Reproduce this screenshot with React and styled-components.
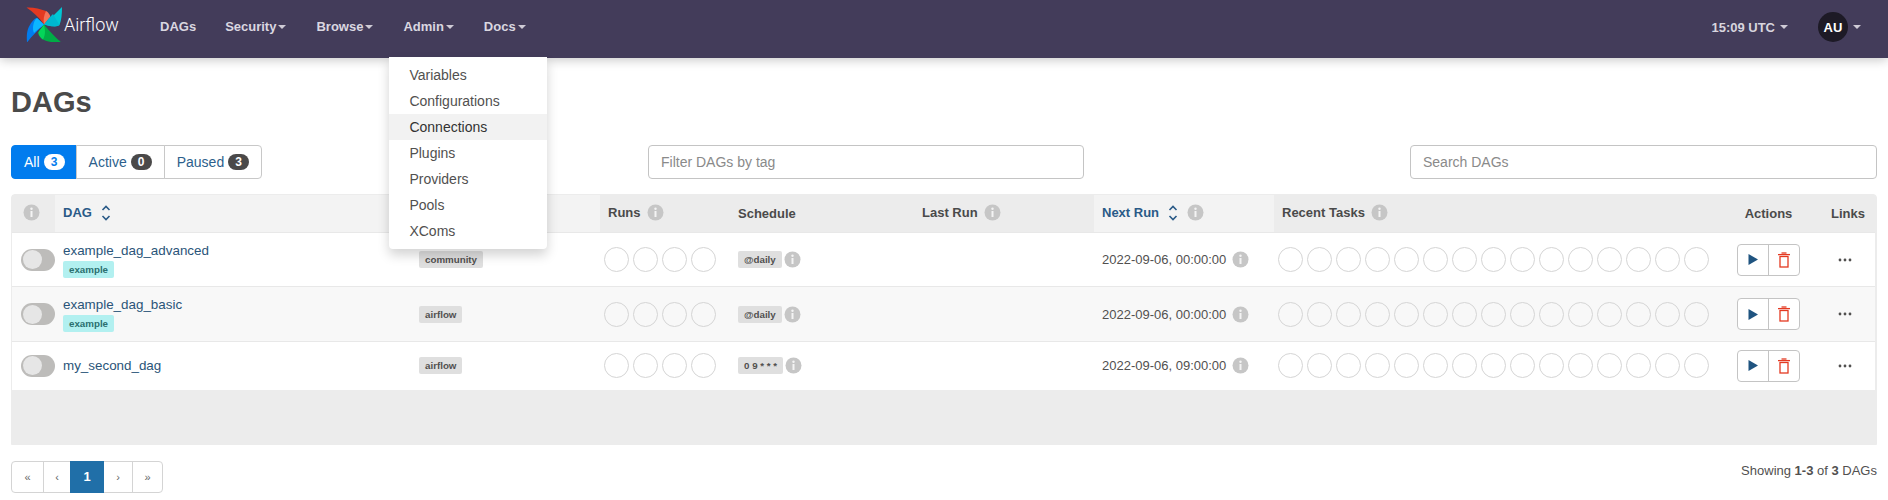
import React from 'react';
import styled, { createGlobalStyle } from 'styled-components';

const GlobalStyle = createGlobalStyle`
  html, body {
    margin: 0;
    padding: 0;
    height: 500px;
    overflow: hidden;
    background: #fff;
    font-family: "Liberation Sans", Arial, sans-serif;
    font-size: 13px;
    color: #51504f;
  }
`;

// Navbar

const Navbar = styled.nav`
  position: relative;
  z-index: 2;
  display: flex;
  align-items: center;
  height: 58px;
  padding: 0 27px 0 26px;
  background: #433c5a;
  box-shadow: 0 2px 10px rgba(0, 0, 0, 0.22);
`;

const Brand = styled.a`
  display: flex;
  align-items: center;
  width: 119px;
  height: 48px;
  margin-top: -10px;
  color: #fff;
`;

const BrandText = styled.span`
  margin: 0 0 0 2px;
  font-family: Roboto, "Liberation Sans", sans-serif;
  font-weight: 300;
  font-size: 18px;
`;

const NavList = styled.ul`
  display: flex;
  margin: 0;
  padding: 0;
  list-style: none;
`;

const NavItem = styled.li`
  position: relative;
  display: flex;
  align-items: center;
  height: 20px;
  margin-top: -4px;
  padding: 0 ${(props) => (props.$tight ? 14 : 15)}px 0 15px;
  color: #dad7e0;
  font-weight: 700;
  font-size: 13px;
  line-height: 20px;
`;

const Caret = styled.span`
  width: 0;
  height: 0;
  margin-left: ${(props) => props.$gap || 2}px;
  border-top: 4px solid ${(props) => props.$color || '#cfcbd6'};
  border-left: 4px solid transparent;
  border-right: 4px solid transparent;
`;

const NavRight = styled.div`
  display: flex;
  align-items: center;
  margin: -4px 0 0 auto;
  color: #d8d5de;
  font-weight: 700;
`;

const Avatar = styled.span`
  display: flex;
  align-items: center;
  justify-content: center;
  width: 30px;
  height: 30px;
  margin-left: 30px;
  border-radius: 50%;
  background: #1d1a26;
  color: #fff;
  font-size: 13px;
`;

const Menu = styled.ul`
  position: absolute;
  top: 40px;
  left: 1px;
  width: 158px;
  margin: 0;
  padding: 5px 0;
  list-style: none;
  background: #fff;
  border-radius: 0 0 4px 4px;
  box-shadow: 0 6px 12px rgba(0, 0, 0, 0.175);
`;

const MenuItem = styled.li`
  height: 26px;
  padding: 0 20px;
  background: ${(props) => (props.$active ? '#f2f2f2' : 'transparent')};
  color: ${(props) => (props.$active ? '#333' : '#51504f')};
  font-weight: 400;
  font-size: 14px;
  line-height: 26px;
`;

// Page

const Page = styled.main`
  padding: 0 11px;
`;

const Title = styled.h2`
  margin: 0;
  padding: 27px 0 0 0;
  height: 60px;
  color: #4a4a4a;
  font-weight: 700;
  font-size: 29px;
  line-height: 34px;
`;

const Toolbar = styled.div`
  display: grid;
  grid-template-columns: 637px 436px 1fr;
  align-items: center;
  height: 34px;
`;

const FilterGroup = styled.div`
  display: flex;
`;

const FilterButton = styled.a`
  display: flex;
  align-items: center;
  height: 34px;
  box-sizing: border-box;
  padding: 0 ${(props) => (props.$first ? 11 : 12)}px 0 12px;
  border: 1px solid ${(props) => (props.$active ? '#017cee' : '#c8c8c8')};
  margin-left: ${(props) => (props.$first ? 0 : -1)}px;
  border-radius: ${(props) => (props.$first ? '4px 0 0 4px' : props.$last ? '0 4px 4px 0' : '0')};
  background: ${(props) => (props.$active ? '#017cee' : '#fff')};
  color: ${(props) => (props.$active ? '#fff' : '#2d5f8c')};
  font-size: 14px;
`;

const Badge = styled.span`
  width: 21px;
  height: 16px;
  margin-left: 4px;
  border-radius: 8px;
  background: ${(props) => (props.$active ? '#fff' : '#4a4949')};
  color: ${(props) => (props.$active ? '#017cee' : '#fff')};
  font-weight: 700;
  font-size: 12px;
  line-height: 16px;
  text-align: center;
`;

const SearchInput = styled.input`
  box-sizing: border-box;
  justify-self: ${(props) => (props.$right ? 'end' : 'stretch')};
  width: ${(props) => (props.$right ? '467px' : '100%')};
  height: 34px;
  padding: 0 12px;
  border: 1px solid #c4c4c4;
  border-radius: 4px;
  outline: none;
  font-family: inherit;
  font-size: 14px;
  &::placeholder {
    color: #8a8a8a;
    opacity: 1;
  }
`;

// Table

const TableWrap = styled.div`
  box-sizing: border-box;
  height: 251px;
  margin-top: 15px;
  border: 1px solid #ececec;
  border-radius: 4px 4px 0 0;
  background: #ececec;
`;

const Table = styled.table`
  width: 1863px;
  table-layout: fixed;
  border-collapse: collapse;
`;

const HeadCell = styled.th`
  height: 37px;
  padding: ${(props) => props.$padding || '0 8px'};
  background: ${(props) => (props.$sorted ? '#f3f3f3' : '#ececec')};
  color: ${(props) => (props.$link ? '#2a5a87' : '#4a4a4a')};
  font-weight: 700;
  font-size: 13px;
  text-align: ${(props) => props.$align || 'left'};
  white-space: nowrap;
`;

const HeadInner = styled.span`
  display: inline-flex;
  align-items: center;
  gap: ${(props) => props.$gap || 6}px;
  margin-bottom: 2px;
  vertical-align: middle;
`;

const Row = styled.tr`
  height: ${(props) => props.$height}px;
  background: ${(props) => (props.$alt ? '#f8f8f8' : '#fff')};
  border-top: 1px solid #e8e8e8;
`;

const Cell = styled.td`
  padding: 0 ${(props) => props.$right || 8}px 0 ${(props) => props.$left || 8}px;
  text-align: ${(props) => props.$align || 'left'};
  vertical-align: middle;
  white-space: nowrap;
`;

const Toggle = styled.span`
  display: block;
  width: 34px;
  height: 22px;
  box-sizing: border-box;
  padding: 1.5px;
  border-radius: 11px;
  background: #bdbcba;
`;

const Knob = styled.span`
  display: block;
  width: 19px;
  height: 19px;
  border-radius: 50%;
  background: #e6e6e6;
`;

const DagName = styled.a`
  display: block;
  color: #2a5479;
  font-size: 13.4px;
  line-height: 18px;
`;

const Tag = styled.span`
  display: inline-block;
  height: 17px;
  padding: 0 6px;
  border-radius: 2px;
  background: ${(props) => (props.$teal ? '#b2f0f0' : '#dfdfdf')};
  color: ${(props) => (props.$teal ? '#2b6f6f' : '#51504f')};
  font-weight: 700;
  font-size: 9.75px;
  line-height: 17px;
  vertical-align: middle;
`;

const TagRow = styled.div`
  display: flex;
  margin-top: 1px;
`;

const Circles = styled.div`
  display: flex;
  gap: 4px;
  margin-left: -4px;
`;

const Circle = styled.span`
  width: 25px;
  height: 25px;
  box-sizing: border-box;
  border: 1.5px solid #d5d5d5;
  border-radius: 50%;
`;

const Inline = styled.div`
  display: flex;
  align-items: center;
  gap: ${(props) => props.$gap || 2}px;
`;

const ActionGroup = styled.div`
  display: inline-flex;
  height: 32px;
  box-sizing: border-box;
  border: 1px solid #c4c4c4;
  border-radius: 4px;
  background: #fff;
  vertical-align: middle;
`;

const ActionButton = styled.span`
  display: flex;
  align-items: center;
  justify-content: center;
  width: ${(props) => props.$width}px;
  border-left: ${(props) => (props.$divider ? '1px solid #c4c4c4' : 'none')};
`;

const DotsWrap = styled.span`
  display: flex;
  justify-content: flex-end;
  margin-right: 12px;
`;

// Footer

const Footer = styled.footer`
  display: flex;
  justify-content: space-between;
  align-items: flex-start;
  margin-top: 16px;
`;

const Pager = styled.ul`
  display: flex;
  height: 32px;
  margin: 0;
  padding: 0;
  box-sizing: border-box;
  list-style: none;
  border: 1px solid #d4d4d4;
  border-radius: 4px;
`;

const PageItem = styled.li`
  width: ${(props) => props.$width}px;
  margin: -1px 0;
  box-sizing: border-box;
  border-left: ${(props) => (props.$divider ? '1px solid #d4d4d4' : 'none')};
  background: ${(props) => (props.$active ? '#206fa8' : 'transparent')};
  color: ${(props) => (props.$active ? '#fff' : '#666')};
  font-weight: ${(props) => (props.$active ? 700 : 400)};
  font-size: ${(props) => (props.$active ? 13 : 11)}px;
  line-height: 32px;
  text-align: center;
`;

const Showing = styled.p`
  margin: 0;
  color: #51504f;
  font-size: 13px;
  line-height: 20px;
`;

// Drawings

function Logo() {
  return (
    <svg width="36" height="36" viewBox="0 0 36 36">
      <path d="M0.5 1.5C7 1 14 3 20 5L24 11L18 18.5C13 11 7 6 0.5 1.5Z" fill="#e43921" />
      <path d="M20 5C22 6 24.5 9 24 11L18 18.5C17 14 18 9 20 5Z" fill="#f4735a" />
      <path d="M36 1C36 8 35.5 14 33.5 19C32 21 26 21 18 18.5C24 13 30 7 36 1Z" fill="#00c7d4" />
      <path d="M18 18.5C21 14 24 11 27 8L33.5 19C30 21 24 20.5 18 18.5Z" fill="#00b8d0" />
      <path d="M1 36.5C0.5 30 1 26 2 23C4 18 8 12 11 12L18 18.5C12 24 6 30 1 36.5Z" fill="#017cee" />
      <path d="M11 12L18 18.5C14 22 10 25 8 27C6 23 7 15 11 12Z" fill="#0cb6ff" />
      <path d="M36 37C28 37 21 35.5 17 33.5C14 31.5 12 28 12.5 26L18 18.5C24 26 30 32 36 37Z" fill="#00ad46" />
      <path d="M18 18.5C19 24 20 28 17 33.5C14 31.5 12 28 12.5 26Z" fill="#04d659" />
    </svg>
  );
}

function InfoIcon() {
  return (
    <svg width="17" height="17" viewBox="0 0 17 17" style={{ flex: 'none' }}>
      <circle cx="8.5" cy="8.5" r="8" fill="#c6c6c6" />
      <circle cx="8.5" cy="4.8" r="1.2" fill="#f4f4f4" />
      <rect x="7.5" y="7" width="2" height="6" fill="#f4f4f4" />
    </svg>
  );
}

function SortIcon() {
  return (
    <svg width="10" height="16" viewBox="0 0 10 16" fill="none" stroke="#2a5a87" strokeWidth="1.6">
      <path d="M1.5 5L5 1.5L8.5 5" />
      <path d="M1.5 11L5 14.5L8.5 11" />
    </svg>
  );
}

function PlayIcon() {
  return (
    <svg width="10" height="11" viewBox="0 0 10 11">
      <path d="M0.5 0L10 5.5L0.5 11Z" fill="#1f5480" />
    </svg>
  );
}

function TrashIcon() {
  return (
    <svg width="12" height="16" viewBox="0 0 12 16" fill="none" stroke="#e43921">
      <path d="M0 2.6H12" strokeWidth="1.3" />
      <path d="M3.5 1H8.5" strokeWidth="1.3" />
      <rect x="2" y="4.5" width="8" height="10.5" strokeWidth="1.3" />
    </svg>
  );
}

function Dots() {
  return (
    <DotsWrap>
      <svg width="14" height="4" viewBox="0 0 14 4" fill="#51504f">
        <circle cx="2" cy="2" r="1.4" />
        <circle cx="7" cy="2" r="1.4" />
        <circle cx="12" cy="2" r="1.4" />
      </svg>
    </DotsWrap>
  );
}

// Data

const adminLinks = ['Variables', 'Configurations', 'Connections', 'Plugins', 'Providers', 'Pools', 'XComs'];

const dags = [
  { name: 'example_dag_advanced', tag: 'example', owner: 'community', schedule: '@daily', next: '2022-09-06, 00:00:00', height: 54 },
  { name: 'example_dag_basic', tag: 'example', owner: 'airflow', schedule: '@daily', next: '2022-09-06, 00:00:00', height: 55, alt: true },
  { name: 'my_second_dag', owner: 'airflow', schedule: '0 9 * * *', next: '2022-09-06, 09:00:00', height: 48 },
];

const range = (n) => Array.from({ length: n }, (_, i) => i);

function DagRow({ dag }) {
  return (
    <Row $height={dag.height} $alt={dag.alt}>
      <Cell $left={9} $right={1}>
        <Toggle>
          <Knob />
        </Toggle>
      </Cell>
      <Cell>
        <DagName>{dag.name}</DagName>
        {dag.tag && (
          <TagRow>
            <Tag $teal>{dag.tag}</Tag>
          </TagRow>
        )}
      </Cell>
      <Cell $left={9}>
        <Tag>{dag.owner}</Tag>
      </Cell>
      <Cell>
        <Circles>
          {range(4).map((i) => (
            <Circle key={i} />
          ))}
        </Circles>
      </Cell>
      <Cell>
        <Inline>
          <Tag>{dag.schedule}</Tag>
          <InfoIcon />
        </Inline>
      </Cell>
      <Cell />
      <Cell>
        <Inline $gap={6}>
          {dag.next}
          <InfoIcon />
        </Inline>
      </Cell>
      <Cell>
        <Circles>
          {range(15).map((i) => (
            <Circle key={i} />
          ))}
        </Circles>
      </Cell>
      <Cell $align="center" $left={1} $right={1}>
        <ActionGroup>
          <ActionButton $width={30}>
            <PlayIcon />
          </ActionButton>
          <ActionButton $width={30} $divider>
            <TrashIcon />
          </ActionButton>
        </ActionGroup>
      </Cell>
      <Cell $align="right" $right={11} $left={0}>
        <Dots />
      </Cell>
    </Row>
  );
}

export default function App() {
  return (
    <>
      <GlobalStyle />
      <Navbar>
        <Brand>
          <Logo />
          <BrandText>Airflow</BrandText>
        </Brand>
        <NavList>
          <NavItem $tight>DAGs</NavItem>
          <NavItem>
            Security
            <Caret />
          </NavItem>
          <NavItem>
            Browse
            <Caret />
          </NavItem>
          <NavItem>
            Admin
            <Caret />
            <Menu>
              {adminLinks.map((link) => (
                <MenuItem key={link} $active={link === 'Connections'}>
                  {link}
                </MenuItem>
              ))}
            </Menu>
          </NavItem>
          <NavItem>
            Docs
            <Caret />
          </NavItem>
        </NavList>
        <NavRight>
          15:09 UTC
          <Caret $gap={5} />
          <Avatar>AU</Avatar>
          <Caret $gap={5} />
        </NavRight>
      </Navbar>
      <Page>
        <Title>DAGs</Title>
        <Toolbar>
          <FilterGroup>
            <FilterButton $first $active>
              All
              <Badge $active>3</Badge>
            </FilterButton>
            <FilterButton>
              Active
              <Badge>0</Badge>
            </FilterButton>
            <FilterButton $last>
              Paused
              <Badge>3</Badge>
            </FilterButton>
          </FilterGroup>
          <SearchInput placeholder="Filter DAGs by tag" />
          <SearchInput $right placeholder="Search DAGs" />
        </Toolbar>
        <TableWrap>
          <Table>
            <colgroup>
              {[43, 355, 190, 130, 184, 180, 180, 455, 79, 67].map((w, i) => (
                <col key={i} style={{ width: w }} />
              ))}
            </colgroup>
            <thead>
              <tr>
                <HeadCell $align="center" $padding="0 5px 0 0">
                  <HeadInner>
                    <InfoIcon />
                  </HeadInner>
                </HeadCell>
                <HeadCell $sorted $link>
                  <HeadInner $gap={9}>
                    DAG
                    <SortIcon />
                  </HeadInner>
                </HeadCell>
                <HeadCell $sorted />
                <HeadCell>
                  <HeadInner>
                    Runs
                    <InfoIcon />
                  </HeadInner>
                </HeadCell>
                <HeadCell>Schedule</HeadCell>
                <HeadCell>
                  <HeadInner>
                    Last Run
                    <InfoIcon />
                  </HeadInner>
                </HeadCell>
                <HeadCell $sorted $link>
                  <HeadInner $gap={9}>
                    Next Run
                    <SortIcon />
                    <InfoIcon />
                  </HeadInner>
                </HeadCell>
                <HeadCell>
                  <HeadInner>
                    Recent Tasks
                    <InfoIcon />
                  </HeadInner>
                </HeadCell>
                <HeadCell $align="center">Actions</HeadCell>
                <HeadCell $align="right" $padding="0 10px 0 8px">
                  Links
                </HeadCell>
              </tr>
            </thead>
            <tbody>
              {dags.map((dag) => (
                <DagRow key={dag.name} dag={dag} />
              ))}
            </tbody>
          </Table>
        </TableWrap>
        <Footer>
          <Pager>
            <PageItem $width={31}>«</PageItem>
            <PageItem $width={27} $divider>‹</PageItem>
            <PageItem $width={34} $active>1</PageItem>
            <PageItem $width={28}>›</PageItem>
            <PageItem $width={30} $divider>»</PageItem>
          </Pager>
          <Showing>
            Showing <b>1-3</b> of <b>3</b> DAGs
          </Showing>
        </Footer>
      </Page>
    </>
  );
}
